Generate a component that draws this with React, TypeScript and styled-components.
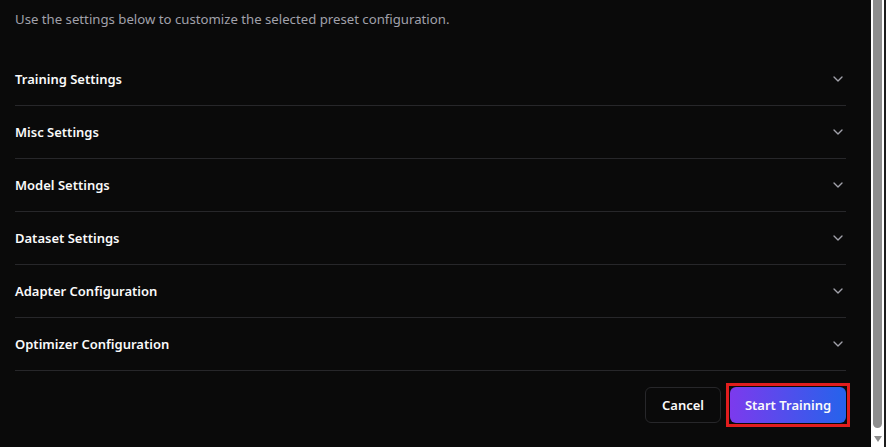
import React from "react";
import styled, { createGlobalStyle } from "styled-components";

const Global = createGlobalStyle`
  html, body { margin: 0; padding: 0; background: #0a0a0a; }
  body { font-family: "Segoe UI", "Noto Sans", "Open Sans", sans-serif; overflow: hidden; }
  * { box-sizing: border-box; }
`;

const Frame = styled.div`
  display: flex;
  width: 886px;
  height: 447px;
  background: #0a0a0a;
`;

const Content = styled.div`
  flex: 1;
  display: flex;
  flex-direction: column;
  padding: 9px 25px 0 15px;
`;

const Description = styled.p`
  margin: 0 0 24px;
  font-size: 13.2px;
  line-height: 20px;
  color: #a1a1aa;
`;

const List = styled.div`
  display: flex;
  flex-direction: column;
`;

const Row = styled.div`
  display: flex;
  align-items: center;
  justify-content: space-between;
  height: 53px;
  padding-bottom: 1px;
  border-bottom: 1px solid #27272a;
`;

const RowTitle = styled.span`
  font-size: 13px;
  font-weight: 600;
  color: #fafafa;
`;

const Chevron = styled.svg`
  width: 16px;
  height: 16px;
  color: #a1a1aa;
`;

const Footer = styled.div`
  display: flex;
  justify-content: flex-end;
  align-items: center;
  gap: 5px;
  margin-top: 12px;
  margin-right: -4px;
`;

const Button = styled.button`
  height: 36px;
  border-radius: 6px;
  font-family: inherit;
  font-size: 13px;
  font-weight: 600;
  color: #fafafa;
  cursor: pointer;
`;

const OutlineButton = styled(Button)`
  width: 76px;
  background: #0a0a0a;
  border: 1px solid #27272a;
`;

const Highlight = styled.div`
  display: inline-flex;
  border: 3px solid #e11d1d;
  padding: 1px;
`;

const PrimaryButton = styled(Button)`
  width: 116px;
  border: none;
  background: linear-gradient(90deg, #7c3aed 0%, #2563eb 100%);
`;

const Scrollbar = styled.div`
  width: 15px;
  display: flex;
  flex-direction: column;
  align-items: flex-start;
  background: #ffffff;
  border-right: 2px solid #1c1c1c;
  padding-left: 2px;
`;

const Thumb = styled.div`
  width: 9px;
  height: 428px;
  background: #8e8e8e;
  border-radius: 0 0 5px 5px;
`;

const Arrow = styled.div`
  margin-top: 8px;
  margin-left: 1px;
  width: 0;
  height: 0;
  border-left: 4px solid transparent;
  border-right: 4px solid transparent;
  border-top: 6px solid #8e8e8e;
`;

const sections = [
  "Training Settings",
  "Misc Settings",
  "Model Settings",
  "Dataset Settings",
  "Adapter Configuration",
  "Optimizer Configuration",
];

export default function App() {
  return (
    <>
      <Global />
      <Frame>
        <Content>
          <Description>
            Use the settings below to customize the selected preset configuration.
          </Description>
          <List>
            {sections.map((s) => (
              <Row key={s}>
                <RowTitle>{s}</RowTitle>
                <Chevron viewBox="0 0 24 24" fill="none" stroke="currentColor" strokeWidth={2} strokeLinecap="round" strokeLinejoin="round">
                  <path d="m6 9 6 6 6-6" />
                </Chevron>
              </Row>
            ))}
          </List>
          <Footer>
            <OutlineButton>Cancel</OutlineButton>
            <Highlight>
              <PrimaryButton>Start Training</PrimaryButton>
            </Highlight>
          </Footer>
        </Content>
        <Scrollbar>
          <Thumb />
          <Arrow />
        </Scrollbar>
      </Frame>
    </>
  );
}
